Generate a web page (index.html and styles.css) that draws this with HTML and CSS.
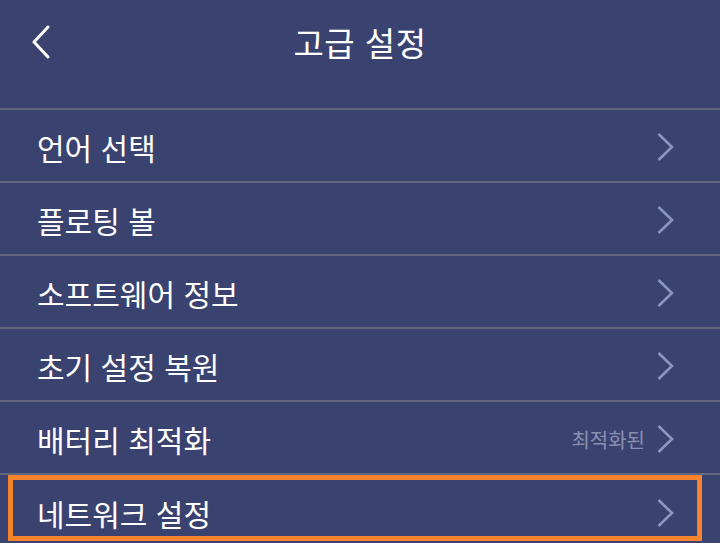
FILE: index.html
```html
<!DOCTYPE html>
<html lang="ko">
<head>
<meta charset="utf-8">
<link rel="stylesheet" href="styles.css">
</head>
<body>
<div class="screen">
  <header class="header">
    <svg class="back" width="20" height="34" viewBox="0 0 20 34"><polyline points="17,2 3,17 17,32" fill="none" stroke="#ffffff" stroke-width="3" stroke-linecap="round" stroke-linejoin="round"/></svg>
    <h1 class="title">고급 설정</h1>
  </header>
  <ul class="list">
    <li class="row"><span class="label">언어 선택</span><span class="right"><svg class="chev" width="20" height="30" viewBox="0 0 20 30"><polyline points="2.5,2 16,15 2.5,28" fill="none" stroke="#8a98bb" stroke-width="2.6"/></svg></span></li>
    <li class="row"><span class="label">플로팅 볼</span><span class="right"><svg class="chev" width="20" height="30" viewBox="0 0 20 30"><polyline points="2.5,2 16,15 2.5,28" fill="none" stroke="#8a98bb" stroke-width="2.6"/></svg></span></li>
    <li class="row"><span class="label">소프트웨어 정보</span><span class="right"><svg class="chev" width="20" height="30" viewBox="0 0 20 30"><polyline points="2.5,2 16,15 2.5,28" fill="none" stroke="#8a98bb" stroke-width="2.6"/></svg></span></li>
    <li class="row"><span class="label">초기 설정 복원</span><span class="right"><svg class="chev" width="20" height="30" viewBox="0 0 20 30"><polyline points="2.5,2 16,15 2.5,28" fill="none" stroke="#8a98bb" stroke-width="2.6"/></svg></span></li>
    <li class="row"><span class="label">배터리 최적화</span><span class="right"><span class="value">최적화된</span><svg class="chev" width="20" height="30" viewBox="0 0 20 30"><polyline points="2.5,2 16,15 2.5,28" fill="none" stroke="#8a98bb" stroke-width="2.6"/></svg></span></li>
    <li class="row row-focus"><span class="label">네트워크 설정</span><span class="right"><svg class="chev" width="20" height="30" viewBox="0 0 20 30"><polyline points="2.5,2 16,15 2.5,28" fill="none" stroke="#8a98bb" stroke-width="2.6"/></svg></span><span class="focus-ring"></span></li>
  </ul>
</div>
</body>
</html>
```
FILE: styles.css
```css
* { box-sizing: border-box; }
html, body {
  margin: 0;
  padding: 0;
  background: #3a4270;
}
body {
  width: 720px;
  height: 543px;
  overflow: hidden;
  font-family: "Noto Sans CJK KR", "Noto Sans", sans-serif;
  color: #ffffff;
}
.screen {
  display: flex;
  flex-direction: column;
}
.header {
  position: relative;
  height: 110px;
  border-bottom: 2px solid #62677f;
  display: flex;
  align-items: flex-start;
  justify-content: center;
}
.back {
  position: absolute;
  left: 31px;
  top: 25px;
}
.title {
  margin: 0;
  padding-top: 18px;
  font-size: 33px;
  font-weight: 400;
  line-height: 48px;
  letter-spacing: 0.5px;
}
.list {
  list-style: none;
  margin: 0;
  padding: 0;
}
.row {
  position: relative;
  height: 73px;
  border-bottom: 2px solid #62677f;
  display: flex;
  align-items: center;
  justify-content: space-between;
  padding: 2px 44px 0 37px;
}
.label {
  font-size: 30px;
  line-height: 40px;
}
.right {
  display: flex;
  align-items: center;
  gap: 11px;
}
.value {
  font-size: 20px;
  line-height: 28px;
  color: #8a91b0;
  padding-top: 2px;
}
.chev { display: block; }
.row-focus { border-bottom: none; }
.focus-ring {
  position: absolute;
  left: 8px;
  top: 0;
  width: 694px;
  height: 66px;
  border: 5px solid #f6842c;
}
```
